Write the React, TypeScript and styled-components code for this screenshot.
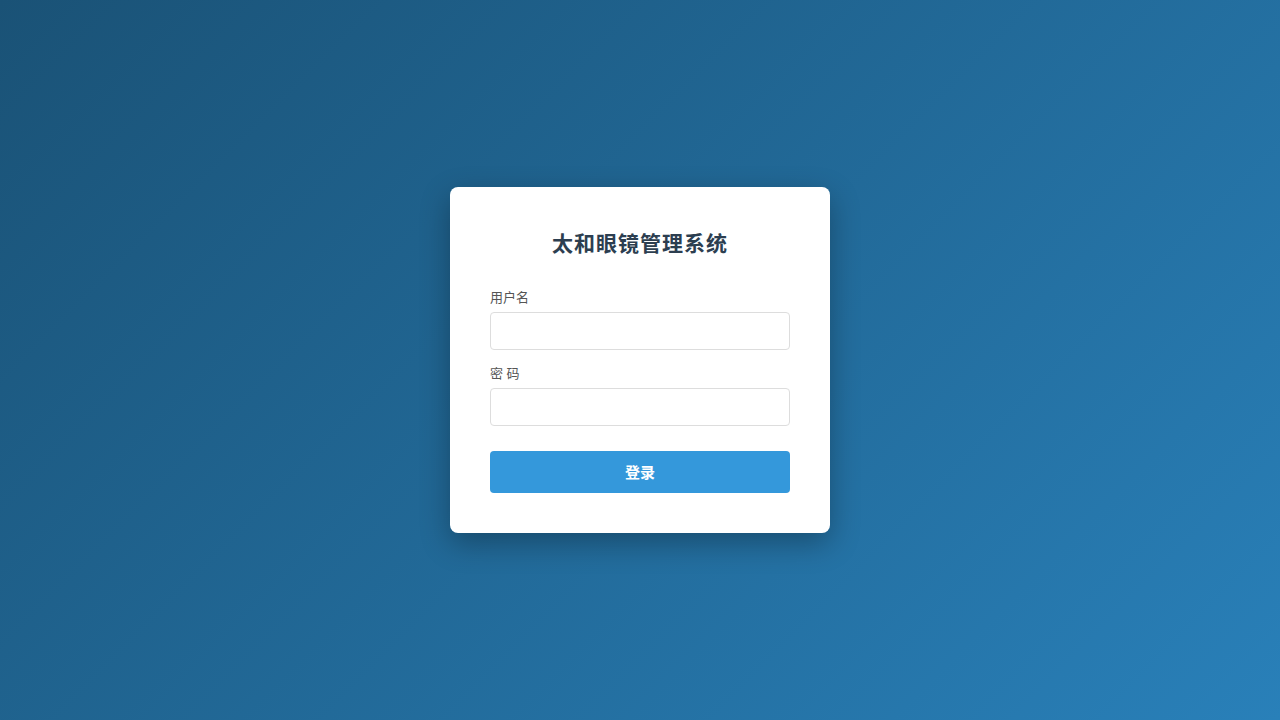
import React from 'react';
import styled, { createGlobalStyle } from 'styled-components';

const GlobalStyle = createGlobalStyle`
  * {
    box-sizing: border-box;
  }

  html,
  body {
    margin: 0;
    padding: 0;
    height: 100%;
  }

  body {
    font-family: 'Noto Sans', 'Noto Sans CJK SC', sans-serif;
  }

  #root {
    height: 100%;
  }
`;

const Page = styled.div`
  display: flex;
  height: 100vh;
  width: 100vw;
  align-items: center;
  justify-content: center;
  background: linear-gradient(135deg, #1a5276 0%, #2980b9 100%);
`;

const Card = styled.div`
  width: 380px;
  padding: 40px;
  background-color: #fff;
  border-radius: 8px;
  box-shadow: 0 10px 30px rgba(0, 0, 0, 0.3);
`;

const Title = styled.h2`
  margin: 0 0 29px;
  text-align: center;
  font-size: 21px;
  line-height: 32px;
  font-weight: 700;
  letter-spacing: 1px;
  color: #2c3e50;
`;

const FormGroup = styled.div<{ $last?: boolean }>`
  margin-bottom: ${(p) => (p.$last ? '0' : '14px')};
`;

const Label = styled.label`
  display: block;
  margin-bottom: 6px;
  font-size: 13px;
  line-height: 18px;
  color: #555;
`;

const Input = styled.input`
  display: block;
  width: 100%;
  height: 38px;
  padding: 0 10px;
  border: 1px solid #ddd;
  border-radius: 4px;
  font-size: 14px;
  font-family: inherit;
  outline: none;

  &:focus {
    border-color: #3498db;
  }
`;

const SubmitButton = styled.button`
  display: block;
  width: 100%;
  height: 42px;
  margin-top: 25px;
  border: none;
  border-radius: 4px;
  background-color: #3498db;
  color: #fff;
  font-size: 15px;
  line-height: 40px;
  font-weight: 700;
  font-family: inherit;
  cursor: pointer;
`;

function App() {
  return (
    <>
      <GlobalStyle />
      <Page>
        <Card>
          <Title>太和眼镜管理系统</Title>
          <form onSubmit={(e) => e.preventDefault()}>
            <FormGroup>
              <Label htmlFor="username">用户名</Label>
              <Input id="username" type="text" />
            </FormGroup>
            <FormGroup $last>
              <Label htmlFor="password">密 码</Label>
              <Input id="password" type="password" />
            </FormGroup>
            <SubmitButton type="submit">登录</SubmitButton>
          </form>
        </Card>
      </Page>
    </>
  );
}

export default App;
